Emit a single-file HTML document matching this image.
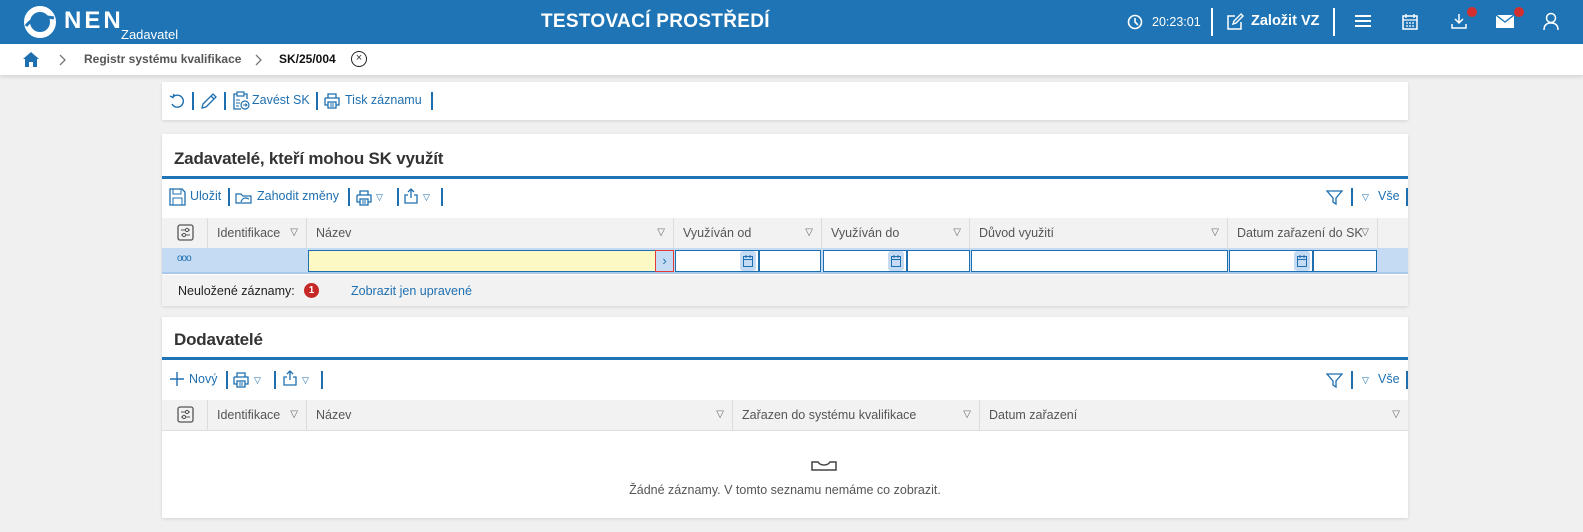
<!DOCTYPE html>
<html><head><meta charset="utf-8">
<style>
*{box-sizing:border-box;margin:0;padding:0}
body{width:1583px;height:532px;overflow:hidden;background:#f0f0f0;font-family:"Liberation Sans",sans-serif;font-size:13px;color:#333;position:relative}
.abs{position:absolute}
.hdr{left:0;top:0;width:1583px;height:44px;background:#1e74b4;color:#fff}
.bc{left:0;top:44px;width:1583px;height:31px;background:#fff;box-shadow:0 2px 4px rgba(0,0,0,.12)}
.panel{background:#fff;box-shadow:0 1px 3px rgba(0,0,0,.12)}
.blue{color:#1e6fb0}
.t{position:absolute;color:#1e6fb0;font-size:12.5px;white-space:nowrap}
.s{position:absolute;width:1.5px;height:18px;background:#1e6fb0}
.tri{position:absolute;color:#1e6fb0;font-size:9px}
.ttl{font-weight:bold;font-size:17px;color:#333;letter-spacing:-.2px}
.bl{height:3px;background:#1e74b4}
.th{background:#f2f2f2;border-bottom:1px solid #ddd;height:31px}
.th div{position:absolute;top:0;height:30px;line-height:30px;color:#555;padding-left:9px;border-right:1px solid #ddd;font-size:12.5px;white-space:nowrap}
.th div i{position:absolute;right:8px;font-style:normal;font-size:10px;color:#666}
.inp{position:absolute;top:2px;height:22px;background:#fff;border:1.5px solid #1e6fb0}
.cal{position:absolute;top:3px;width:16px;height:20px;background:#c5dbf3;border-radius:3px}
.cal svg{position:absolute;left:3px;top:4px}
svg.i{position:absolute}
</style></head><body>

<div class="abs hdr">
  <svg class="abs" style="left:23px;top:5px" width="34" height="34" viewBox="0 0 34 34"><circle cx="17" cy="17" r="13" fill="none" stroke="#fff" stroke-width="6"/><path d="M3 21 Q12 9 31 13" stroke="#1e74b4" stroke-width="3" fill="none"/></svg>
  <div class="abs" style="left:64px;top:7px;font-size:24px;font-weight:bold;letter-spacing:3px">NEN</div>
  <div class="abs" style="left:121px;top:27px;font-size:13px">Zadavatel</div>
  <div class="abs" style="left:541px;top:11px;font-size:19px;font-weight:bold;letter-spacing:.3px">TESTOVACÍ PROSTŘEDÍ</div>
  <svg class="abs" style="left:1127px;top:14px" width="16" height="16" viewBox="0 0 16 16"><circle cx="8" cy="8" r="6.5" fill="none" stroke="#fff" stroke-width="1.6"/><path d="M8 4v4l3 3" stroke="#fff" stroke-width="1.6" fill="none"/></svg>
  <div class="abs" style="left:1152px;top:15px;font-size:12.5px">20:23:01</div>
  <div class="abs" style="left:1211px;top:8px;width:2px;height:28px;background:#fff"></div>
  <svg class="abs" style="left:1226px;top:13px" width="18" height="18" viewBox="0 0 18 18"><path d="M9 3H2v13h13V9" fill="none" stroke="#fff" stroke-width="1.5"/><path d="M7 11l1-3 7-7 2 2-7 7z" fill="none" stroke="#fff" stroke-width="1.4"/></svg>
  <div class="abs" style="left:1251px;top:13px;font-size:14.5px;font-weight:bold">Založit VZ</div>
  <div class="abs" style="left:1333px;top:8px;width:2px;height:28px;background:#fff"></div>
  <div class="abs" style="left:1355px;top:15px;width:16px;height:2px;background:#fff;box-shadow:0 5px 0 #fff,0 10px 0 #fff"></div>
  <svg class="abs" style="left:1402px;top:13px" width="16" height="17" viewBox="0 0 16 17"><rect x="1" y="3" width="14" height="13" fill="none" stroke="#fff" stroke-width="1.5"/><path d="M4 1v4M12 1v4M1 7h14M4 10h2M7 10h2M10 10h2M4 13h2M7 13h2M10 13h2" stroke="#fff" stroke-width="1.3"/></svg>
  <svg class="abs" style="left:1450px;top:12px" width="18" height="18" viewBox="0 0 18 18"><path d="M9 2v9M5 7l4 4 4-4M2 12v4h14v-4" fill="none" stroke="#fff" stroke-width="1.5"/></svg>
  <div class="abs" style="left:1467px;top:7px;width:10px;height:10px;border-radius:50%;background:#d32f2f"></div>
  <svg class="abs" style="left:1496px;top:15px" width="18" height="13" viewBox="0 0 18 13"><rect x="0" y="0" width="18" height="13" fill="#fff"/><path d="M0 0l9 7 9-7" stroke="#1e74b4" stroke-width="1.3" fill="none"/></svg>
  <div class="abs" style="left:1514px;top:7px;width:10px;height:10px;border-radius:50%;background:#d32f2f"></div>
  <svg class="abs" style="left:1543px;top:12px" width="16" height="19" viewBox="0 0 16 19"><circle cx="8" cy="6" r="4.5" fill="none" stroke="#fff" stroke-width="1.5"/><path d="M1 18q0-7 7-7t7 7" fill="none" stroke="#fff" stroke-width="1.5"/></svg>
</div>

<div class="abs bc">
  <svg class="abs" style="left:22px;top:7px" width="18" height="17" viewBox="0 0 18 17"><path d="M9 1L1 8h2v8h4v-5h4v5h4V8h2z" fill="#1e6fb0"/></svg>
  <svg class="abs" style="left:59px;top:10px" width="8" height="12" viewBox="0 0 8 12"><path d="M1 1l5 5-5 5" fill="none" stroke="#777" stroke-width="1.3"/></svg>
  <div class="abs" style="left:84px;top:8px;color:#555;font-weight:bold;font-size:12px">Registr systému kvalifikace</div>
  <svg class="abs" style="left:255px;top:10px" width="8" height="12" viewBox="0 0 8 12"><path d="M1 1l5 5-5 5" fill="none" stroke="#777" stroke-width="1.3"/></svg>
  <div class="abs" style="left:279px;top:8px;color:#111;font-weight:bold;font-size:12px">SK/25/004</div>
  <div class="abs" style="left:351px;top:7px;width:16px;height:16px;border:1.5px solid #222;border-radius:50%;font-size:11px;line-height:12px;text-align:center">×</div>
</div>

<svg width="0" height="0" style="position:absolute">
<defs>
<g id="prn"><path d="M4 5V1h8v4M1 5h14v7h-3M4 12H1V5" fill="none" stroke="#1e6fb0" stroke-width="1.3"/><rect x="4" y="9" width="8" height="6" fill="none" stroke="#1e6fb0" stroke-width="1.3"/><path d="M6 11h4M6 13h4" stroke="#1e6fb0"/></g>
<g id="exp"><path d="M8 1v9M5 4l3-3 3 3M5 7H2v8h12V7h-3" fill="none" stroke="#1e6fb0" stroke-width="1.3"/></g>
<g id="fun"><path d="M1 2h15l-6 7v6l-3-2V9z" fill="none" stroke="#1e6fb0" stroke-width="1.3"/></g>
<g id="sld"><rect x="1" y="1" width="15" height="15" rx="2" fill="none" stroke="#555" stroke-width="1.3"/><path d="M4 6h9M4 11h9" stroke="#555"/><circle cx="10" cy="6" r="1.6" fill="#f2f2f2" stroke="#555"/><circle cx="7" cy="11" r="1.6" fill="#f2f2f2" stroke="#555"/></g>
<g id="cl"><rect x="0.5" y="1.5" width="9" height="10" fill="none" stroke="#1e6fb0"/><path d="M0.5 4.5h9M3 0v3M7 0v3" stroke="#1e6fb0"/></g>
</defs></svg>

<!-- panel 1 -->
<div class="abs panel" style="left:162px;top:82px;width:1246px;height:38px"></div>
<svg class="i" style="left:169px;top:93px" width="17" height="17" viewBox="0 0 17 17"><path d="M4 4A6 6 0 1 1 3 11" fill="none" stroke="#1e6fb0" stroke-width="1.4"/><path d="M1 3l3 1.5L5 1" fill="none" stroke="#1e6fb0" stroke-width="1.4"/></svg>
<div class="s" style="left:192px;top:92px"></div>
<svg class="i" style="left:200px;top:92px" width="17" height="18" viewBox="0 0 17 18"><path d="M2 16l1-4L13 2l3 3L6 15z M11 4l3 3" fill="none" stroke="#1e6fb0" stroke-width="1.3"/></svg>
<div class="s" style="left:224px;top:92px"></div>
<svg class="i" style="left:232px;top:91px" width="18" height="19" viewBox="0 0 18 19"><path d="M5 3H2v15h7M12 3h3v5" fill="none" stroke="#1e6fb0" stroke-width="1.3"/><rect x="5" y="1" width="7" height="4" fill="none" stroke="#1e6fb0" stroke-width="1.2"/><path d="M4 9h4M4 12h4M4 15h3" stroke="#1e6fb0"/><circle cx="13" cy="14" r="4" fill="none" stroke="#1e6fb0" stroke-width="1.2"/><path d="M11 14h4M13.5 12.5l1.5 1.5-1.5 1.5" fill="none" stroke="#1e6fb0"/></svg>
<div class="t" style="left:252px;top:93px">Zavést SK</div>
<div class="s" style="left:316px;top:92px"></div>
<svg class="i" style="left:324px;top:93px" width="16" height="16" viewBox="0 0 16 16"><use href="#prn"/></svg>
<div class="t" style="left:345px;top:93px">Tisk záznamu</div>
<div class="s" style="left:431px;top:92px"></div>

<!-- panel 2 -->
<div class="abs panel" style="left:162px;top:134px;width:1246px;height:172px">
  <div class="abs ttl" style="left:12px;top:15px">Zadavatelé, kteří mohou SK využít</div>
  <div class="abs bl" style="left:0;top:42px;width:1246px"></div>
  <div class="abs th" style="left:0;top:84px;width:1246px">
    <div style="left:0;width:46px"><svg style="position:absolute;left:15px;top:6px" width="17" height="17" viewBox="0 0 17 17"><use href="#sld"/></svg></div>
    <div style="left:46px;width:99px">Identifikace<i>▽</i></div>
    <div style="left:145px;width:367px">Název<i>▽</i></div>
    <div style="left:512px;width:148px">Využíván od<i>▽</i></div>
    <div style="left:660px;width:148px">Využíván do<i>▽</i></div>
    <div style="left:808px;width:258px">Důvod využití<i>▽</i></div>
    <div style="left:1066px;width:150px">Datum zařazení do SK<i>▽</i></div>
  </div>
  <div class="abs" style="left:0;top:114px;width:1246px;height:26px;background:#c5dbf3;border-bottom:2px solid #a9c8ea">
    <div class="abs blue" style="left:15px;top:5px;font-size:10px;letter-spacing:-1px">ooo</div>
    <div class="inp" style="left:146px;width:366px;background:#fdf9c5"></div>
    <div class="abs" style="left:493px;top:2px;width:19px;height:22px;border:1.5px solid #e53935;background:#c5dbf3;color:#1e6fb0;text-align:center;line-height:19px">›</div>
    <div class="inp" style="left:513px;width:84px"></div><div class="cal" style="left:578px"><svg width="10" height="12"><use href="#cl"/></svg></div>
    <div class="inp" style="left:597px;width:62px"></div>
    <div class="inp" style="left:661px;width:84px"></div><div class="cal" style="left:726px"><svg width="10" height="12"><use href="#cl"/></svg></div>
    <div class="inp" style="left:745px;width:63px"></div>
    <div class="inp" style="left:809px;width:257px"></div>
    <div class="inp" style="left:1067px;width:84px"></div><div class="cal" style="left:1132px"><svg width="10" height="12"><use href="#cl"/></svg></div>
    <div class="inp" style="left:1151px;width:64px"></div>
  </div>
  <div class="abs" style="left:0;top:141px;width:1246px;height:31px;background:#f2f2f2">
    <div class="abs" style="left:16px;top:9px;color:#222;font-size:12.5px">Neuložené záznamy:</div>
    <div class="abs" style="left:142px;top:8px;width:15px;height:15px;border-radius:50%;background:#c62828;color:#fff;font-size:10px;font-weight:bold;text-align:center;line-height:15px">1</div>
    <div class="abs blue" style="left:189px;top:9px;font-size:12.5px">Zobrazit jen upravené</div>
  </div>
</div>
<svg class="i" style="left:169px;top:188px" width="17" height="18" viewBox="0 0 17 18"><path d="M1 1h12l3 3v13H1z" fill="none" stroke="#1e6fb0" stroke-width="1.3"/><rect x="4" y="1" width="8" height="5" fill="none" stroke="#1e6fb0"/><rect x="4" y="10" width="9" height="7" fill="none" stroke="#1e6fb0"/></svg>
<div class="t" style="left:190px;top:189px">Uložit</div>
<div class="s" style="left:228px;top:188px"></div>
<svg class="i" style="left:235px;top:191px" width="18" height="13" viewBox="0 0 18 13"><path d="M1 3h5l2 2h8v7H1z" fill="none" stroke="#1e6fb0" stroke-width="1.2"/><path d="M6 11q2-6 8-3" fill="none" stroke="#1e6fb0" stroke-width="1.2"/></svg>
<div class="t" style="left:257px;top:189px">Zahodit změny</div>
<div class="s" style="left:348px;top:188px"></div>
<svg class="i" style="left:356px;top:190px" width="16" height="16" viewBox="0 0 16 16"><use href="#prn"/></svg>
<div class="tri" style="left:376px;top:192px">▽</div>
<div class="s" style="left:397px;top:188px"></div>
<svg class="i" style="left:403px;top:188px" width="16" height="17" viewBox="0 0 16 17"><use href="#exp"/></svg>
<div class="tri" style="left:423px;top:192px">▽</div>
<div class="s" style="left:441px;top:188px"></div>
<svg class="i" style="left:1326px;top:189px" width="17" height="17" viewBox="0 0 17 17"><use href="#fun"/></svg>
<div class="s" style="left:1351px;top:188px"></div>
<div class="tri" style="left:1362px;top:192px">▽</div>
<div class="t" style="left:1378px;top:189px">Vše</div>
<div class="s" style="left:1406px;top:188px"></div>

<!-- panel 3 -->
<div class="abs panel" style="left:162px;top:317px;width:1246px;height:201px">
  <div class="abs ttl" style="left:12px;top:13px">Dodavatelé</div>
  <div class="abs bl" style="left:0;top:40px;width:1246px"></div>
  <div class="abs th" style="left:0;top:83px;width:1246px">
    <div style="left:0;width:46px"><svg style="position:absolute;left:15px;top:6px" width="17" height="17" viewBox="0 0 17 17"><use href="#sld"/></svg></div>
    <div style="left:46px;width:99px">Identifikace<i>▽</i></div>
    <div style="left:145px;width:426px">Název<i>▽</i></div>
    <div style="left:571px;width:247px">Zařazen do systému kvalifikace<i>▽</i></div>
    <div style="left:818px;width:428px;border-right:none">Datum zařazení<i>▽</i></div>
  </div>
  <svg class="abs" style="left:649px;top:143px" width="26" height="11" viewBox="0 0 26 11"><path d="M1 2h6q2 3 6 3t6-3h6v8H1z" fill="none" stroke="#444" stroke-width="1.5"/></svg>
  <div class="abs" style="left:0;top:166px;width:1246px;text-align:center;color:#555;font-size:12.5px">Žádné záznamy. V tomto seznamu nemáme co zobrazit.</div>
</div>
<svg class="i" style="left:170px;top:372px" width="14" height="14" viewBox="0 0 14 14"><path d="M7 0v14M0 7h14" stroke="#1e6fb0" stroke-width="1.4"/></svg>
<div class="t" style="left:189px;top:372px">Nový</div>
<div class="s" style="left:226px;top:371px"></div>
<svg class="i" style="left:233px;top:372px" width="16" height="16" viewBox="0 0 16 16"><use href="#prn"/></svg>
<div class="tri" style="left:254px;top:375px">▽</div>
<div class="s" style="left:274px;top:371px"></div>
<svg class="i" style="left:282px;top:370px" width="16" height="17" viewBox="0 0 16 17"><use href="#exp"/></svg>
<div class="tri" style="left:302px;top:375px">▽</div>
<div class="s" style="left:321px;top:371px"></div>
<svg class="i" style="left:1326px;top:372px" width="17" height="17" viewBox="0 0 17 17"><use href="#fun"/></svg>
<div class="s" style="left:1351px;top:371px"></div>
<div class="tri" style="left:1362px;top:375px">▽</div>
<div class="t" style="left:1378px;top:372px">Vše</div>
<div class="s" style="left:1406px;top:371px"></div>
</body></html>
